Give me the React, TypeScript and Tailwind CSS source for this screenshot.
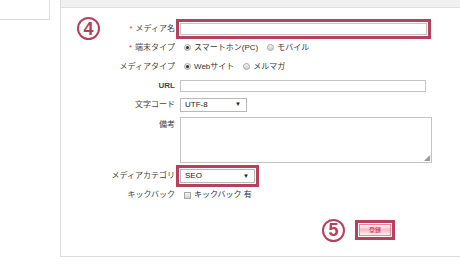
import type { ReactNode } from 'react'

const font = { fontFamily: '"Liberation Sans", "Noto Sans CJK JP", sans-serif' }

function Marker({ n }: { n: string }) {
  return (
    <span className="flex h-[23px] w-[23px] items-center justify-center rounded-full border-2 border-[#b5415e] text-[18px] font-bold leading-none text-[#b5415e]">
      {n}
    </span>
  )
}

function Radio({ checked }: { checked?: boolean }) {
  return (
    <span className="flex h-[7px] w-[7px] items-center justify-center rounded-full border border-[#a8a8a8] bg-gradient-to-b from-[#f4f4f4] to-[#cfcfcf]">
      {checked && <span className="h-[3px] w-[3px] rounded-full bg-[#333]" />}
    </span>
  )
}

function Row({
  label,
  required,
  children,
  className = 'h-[19px] items-center',
  labelClass = '',
}: {
  label: string
  required?: boolean
  children: ReactNode
  className?: string
  labelClass?: string
}) {
  return (
    <div className={`flex ${className}`}>
      <div className={`flex w-[114px] justify-end text-[8px] leading-none text-[#444] ${labelClass}`}>
        {required && <span className="mr-[3px] text-[#e8383d]">*</span>}
        <span>{label}</span>
      </div>
      <div className="ml-[5px] flex items-center">{children}</div>
    </div>
  )
}

function Select({ value, width, highlight }: { value: string; width: string; highlight?: boolean }) {
  return (
    <div
      className={`flex h-[14px] items-center justify-between border border-[#b9b9b9] bg-white pl-[4px] pr-[5px] text-[8px] text-[#222] ${width} ${
        highlight ? 'outline-[3px] outline-offset-1 outline-[#b5415e] outline-solid' : ''
      }`}
    >
      <span>{value}</span>
      <span className="text-[6px]">▼</span>
    </div>
  )
}

export default function App() {
  return (
    <div className="flex h-[276px] w-[460px] items-start overflow-hidden bg-white" style={font}>
      <div className="h-[20px] w-[50px] shrink-0 border-r border-b border-[#dcdcdc]" />
      <div className="ml-[10px] flex-1 border-b border-l border-[#dcdcdc]">
        <div className="h-[8px] border-b border-[#dedede] bg-[#f0f0f0]" />
        <div className="flex flex-col pt-[11px] pb-[16px]">
          <div className="flex h-[19px] items-center">
            <div className="flex w-[114px] items-center text-[8px] leading-none text-[#444]">
              <span className="ml-[16px]">
                <Marker n="4" />
              </span>
              <span className="ml-auto mr-[3px] text-[#e8383d]">*</span>
              <span>メディア名</span>
            </div>
            <div className="ml-[5px] h-[12px] w-[247px] border border-[#c4c4c4] bg-white outline-[3px] outline-offset-1 outline-[#b5415e] outline-solid" />
          </div>
          <Row label="端末タイプ" required>
            <span className="ml-[4px] flex items-center gap-[3px] text-[8px] text-[#333]">
              <Radio checked />
              <span>スマートホン(PC)</span>
              <span className="ml-[6px]">
                <Radio />
              </span>
              <span>モバイル</span>
            </span>
          </Row>
          <Row label="メディアタイプ">
            <span className="ml-[4px] flex items-center gap-[3px] text-[8px] text-[#333]">
              <Radio checked />
              <span>Webサイト</span>
              <span className="ml-[6px]">
                <Radio />
              </span>
              <span>メルマガ</span>
            </span>
          </Row>
          <Row label="URL" labelClass="font-semibold">
            <div className="h-[12px] w-[246px] border border-[#c4c4c4] bg-white" />
          </Row>
          <Row label="文字コード">
            <Select value="UTF-8" width="w-[67px]" />
          </Row>
          <Row label="備考" className="mt-[3px] h-[46px] items-start" labelClass="pt-[4px]">
            <div className="relative h-[46px] w-[252px] border border-[#c4c4c4] bg-white">
              <span className="absolute right-[1px] bottom-[1px] text-[6px] leading-none text-[#999]">◢</span>
            </div>
          </Row>
          <Row label="メディアカテゴリ" className="mt-[3px] h-[20px] items-center">
            <Select value="SEO" width="w-[75px]" highlight />
          </Row>
          <Row label="キックバック" className="h-[18px] items-center">
            <span className="ml-[4px] flex items-center gap-[3px] text-[8px] text-[#333]">
              <span className="h-[7px] w-[7px] border border-[#a8a8a8] bg-gradient-to-b from-[#f4f4f4] to-[#d4d4d4]" />
              <span>キックバック 有</span>
            </span>
          </Row>
          <div className="mt-[16px] flex h-[20px] items-center pl-[261px]">
            <Marker n="5" />
            <div className="ml-[14px] flex h-[12px] w-[32px] items-center justify-center border border-[#e58797] bg-gradient-to-b from-[#fff3f5] via-[#f7b9c6] to-[#fff3f5] text-[6px] leading-none text-[#d0203f] outline-[3px] outline-offset-1 outline-[#b5415e] outline-solid">
              登録
            </div>
          </div>
        </div>
      </div>
    </div>
  )
}
